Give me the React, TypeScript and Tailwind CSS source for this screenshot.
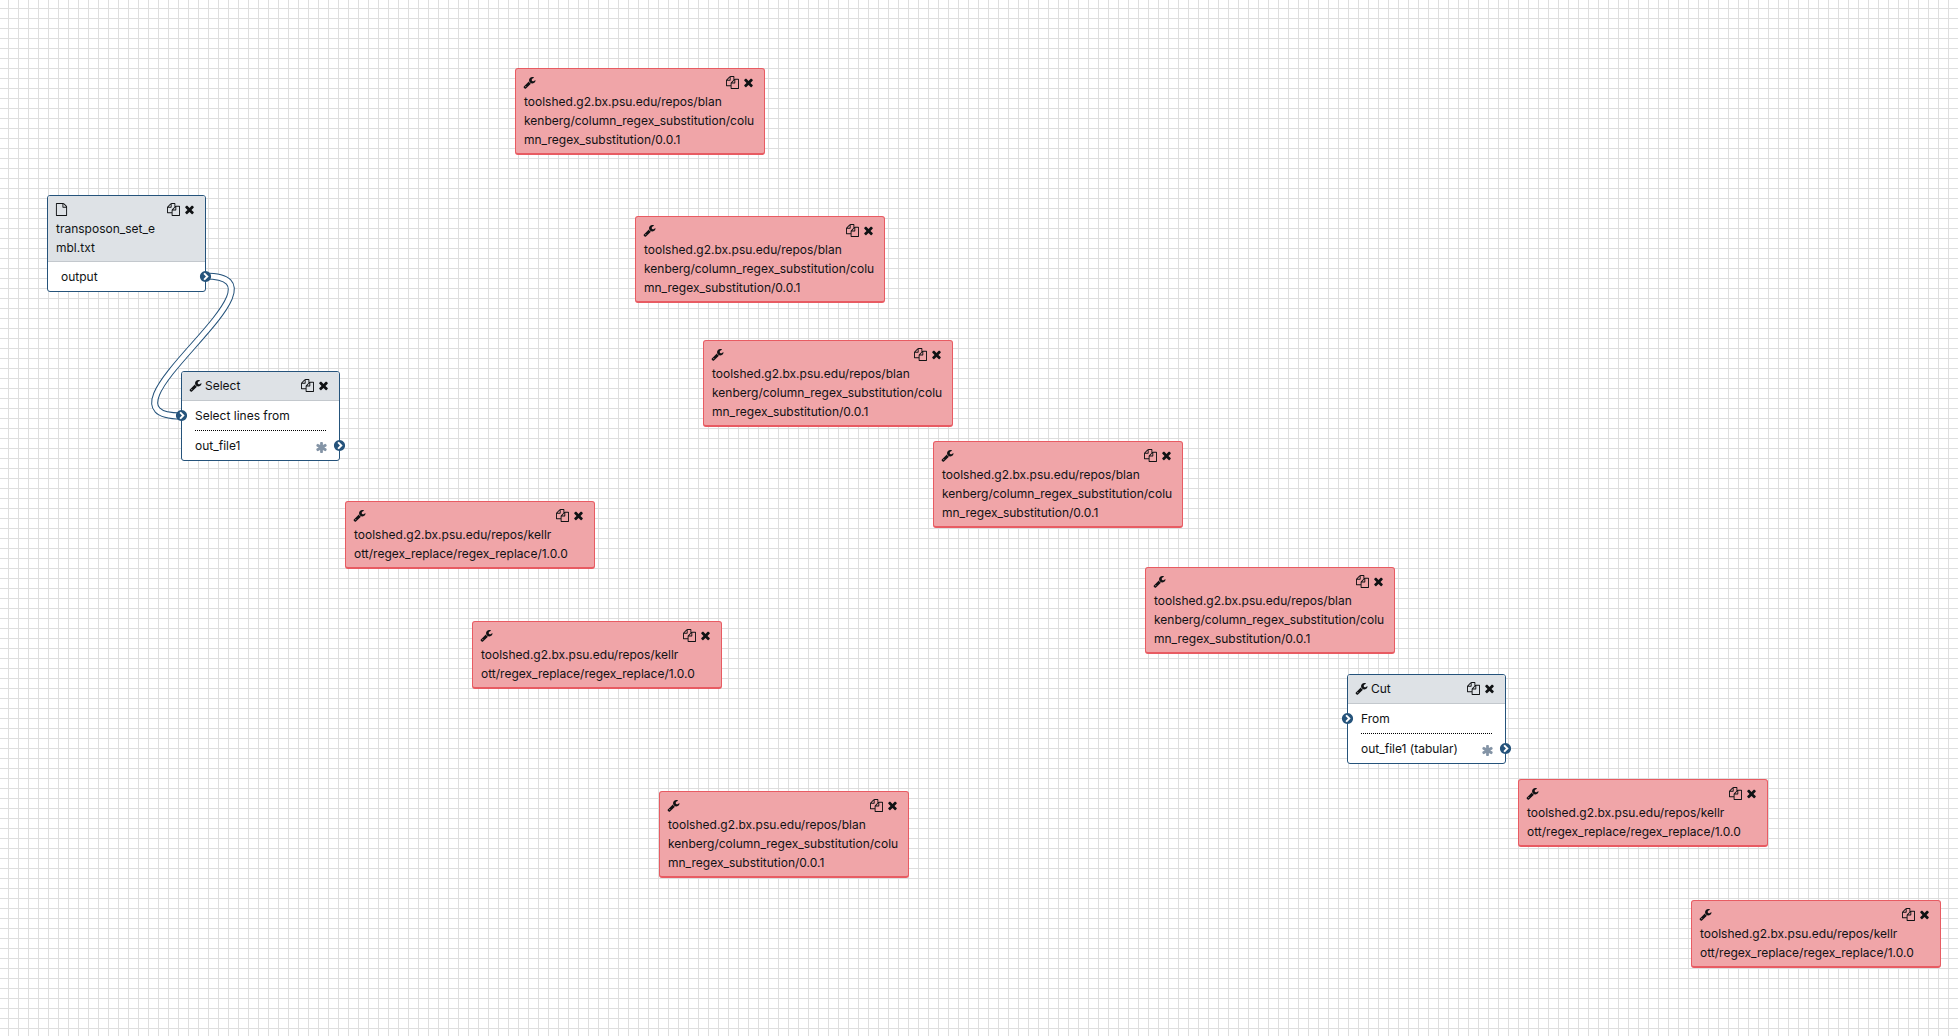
import React from "react";

const ICONS = {
  files:
    "M1696 384q40 0 68 28t28 68v1216q0 40-28 68t-68 28h-960q-40 0-68-28t-28-68v-288h-544q-40 0-68-28t-28-68v-672q0-40 20-88t48-76l408-408q28-28 76-48t88-20h416q40 0 68 28t28 68v328q68-40 128-40h416zm-544 213l-299 299h299v-299zm-640-384l-299 299h299v-299zm196 647l316-316v-416h-384v416q0 40-28 68t-68 28h-416v640h512v-256q0-40 20-88t48-76zm956 804v-1152h-384v416q0 40-28 68t-68 28h-416v640h896z",
  wrench:
    "M448 1472q0-26-19-45t-45-19-45 19-19 45 19 45 45 19 45-19 19-45zm644-420l-682 682q-37 37-90 37-52 0-91-37l-106-108q-38-36-38-90 0-53 38-91l681-681q39 98 114.5 173.5t173.5 114.5zm634-435q0 39-23 106-47 134-164.5 217.5t-258.5 83.5q-185 0-316.5-131.5t-131.5-316.5 131.5-316.5 316.5-131.5q58 0 121.5 16.5t107.5 46.5q16 11 16 28t-16 28l-293 169v224l193 107q5-3 79-48.5t135.5-81 70.5-35.5q15 0 23.5 10t8.5 25z",
  times:
    "M1490 1322q0 40-28 68l-136 136q-28 28-68 28t-68-28l-294-294-294 294q-28 28-68 28t-68-28l-136-136q-28-28-28-68t28-68l294-294-294-294q-28-28-28-68t28-68l136-136q28-28 68-28t68 28l294 294 294-294q28-28 68-28t68 28l136 136q28 28 28 68t-28 68l-294 294 294 294q28 28 28 68z",
  file:
    "M1596 380q28 28 48 76t20 88v1152q0 40-28 68t-68 28h-1344q-40 0-68-28t-28-68v-1600q0-40 28-68t68-28h896q40 0 88 20t76 48zm-444-244v376h376q-10-29-22-41l-313-313q-12-12-41-22zm384 1528v-1024h-416q-40 0-68-28t-28-68v-416h-768v1536h1280z",
  chevron:
    "M845 1395l454-454q19-19 19-45t-19-45l-454-454q-19-19-45-19t-45 19l-102 102q-19 19-19 45t19 45l307 307-307 307q-19 19-19 45t19 45l102 102q19 19 45 19t45-19zm819-499q0 209-103 385.5t-279.5 279.5-385.5 103-385.5-103-279.5-279.5-103-385.5 103-385.5 279.5-279.5 385.5-103 385.5 103 279.5 279.5 103 385.5z",
  asterisk:
    "M1546 1050q46 26 59.5 77.5t-12.5 97.5l-64 110q-26 46-77.5 59.5t-97.5-12.5l-266-153v307q0 52-38 90t-90 38h-128q-52 0-90-38t-38-90v-307l-266 153q-46 26-97.5 12.5t-77.5-59.5l-64-110q-26-46-12.5-97.5t59.5-77.5l266-154-266-154q-46-26-59.5-77.5t12.5-97.5l64-110q26-46 77.5-59.5t97.5 12.5l266 153v-307q0-52 38-90t90-38h128q52 0 90 38t38 90v307l266-153q46-26 97.5-12.5t77.5 59.5l64 110q26 46 12.5 97.5t-59.5 77.5l-266 154z",
};

function Icon({ name, className }: { name: keyof typeof ICONS; className: string }) {
  return (
    <svg viewBox="0 0 1792 1792" fill="currentColor" aria-hidden="true" className={className}>
      <path d={ICONS[name]} />
    </svg>
  );
}

function NodeActions() {
  return (
    <div className="ml-auto flex items-center gap-[3px] pr-px">
      <button type="button" aria-label="Duplicate" className="block">
        <Icon name="files" className="size-[13px]" />
      </button>
      <button type="button" aria-label="Remove" className="block">
        <Icon name="times" className="size-[13px]" />
      </button>
    </div>
  );
}

function Terminal({ side, label }: { side: "in" | "out"; label: string }) {
  return (
    <button
      type="button"
      aria-label={label}
      className={"absolute top-2 size-[13px] text-[#25537b] " + (side === "in" ? "-left-[7px]" : "-right-[7px]")}
    >
      <span className="absolute inset-[2px] rounded-full bg-white" />
      <Icon name="chevron" className="relative size-[13px]" />
    </button>
  );
}

type Place = { x: number; y: number };

const BLANKENBERG = ["toolshed.g2.bx.psu.edu/repos/blan", "kenberg/column_regex_substitution/colu", "mn_regex_substitution/0.0.1"];
const KELLROTT = ["toolshed.g2.bx.psu.edu/repos/kellr", "ott/regex_replace/regex_replace/1.0.0"];

const MISSING: (Place & { lines: string[] })[] = [
  { x: 515, y: 68, lines: BLANKENBERG },
  { x: 635, y: 216, lines: BLANKENBERG },
  { x: 703, y: 340, lines: BLANKENBERG },
  { x: 933, y: 441, lines: BLANKENBERG },
  { x: 345, y: 501, lines: KELLROTT },
  { x: 1145, y: 567, lines: BLANKENBERG },
  { x: 472, y: 621, lines: KELLROTT },
  { x: 659, y: 791, lines: BLANKENBERG },
  { x: 1518, y: 779, lines: KELLROTT },
  { x: 1691, y: 900, lines: KELLROTT },
];

function MissingNode({ x, y, lines }: Place & { lines: string[] }) {
  return (
    <section
      style={{ left: x, top: y }}
      className="absolute w-[250px] rounded-[3px] border border-b-2 border-[#e85b62] bg-[#f0a5a8] px-2 py-1"
    >
      <div className="flex h-[19px] items-center">
        <Icon name="wrench" className="-ml-px size-[13px]" />
        <NodeActions />
      </div>
      {lines.map((line) => (
        <div key={line} className="whitespace-nowrap">
          {line}
        </div>
      ))}
    </section>
  );
}

function ToolNode({ x, y, title, input, output }: Place & { title: string; input: string; output: string }) {
  return (
    <section style={{ left: x, top: y }} className="absolute w-[159px] rounded-[3px] border border-[#25537b] bg-white">
      <header className="flex items-center rounded-t-[2px] border-b border-[#c3c8cd] bg-[#dee2e6] px-2 pt-1 pb-[5px]">
        <Icon name="wrench" className="-ml-px mr-[3px] size-[13px]" />
        <h2>{title}</h2>
        <NodeActions />
      </header>
      <div className="relative px-[13px] py-[5px]">
        {input}
        <Terminal side="in" label={"Input: " + input} />
      </div>
      <hr className="mx-[13px] border-t border-dotted border-black" />
      <div className="relative flex items-center justify-between py-[5px] pl-[13px] pr-[11px]">
        {output}
        <button type="button" aria-label="Mark as workflow output" className="mt-[3px] text-[#8494a6]">
          <Icon name="asterisk" className="size-[13px]" />
        </button>
        <Terminal side="out" label={"Output: " + output} />
      </div>
    </section>
  );
}

function DatasetNode({ x, y }: Place) {
  return (
    <section style={{ left: x, top: y }} className="absolute w-[159px] rounded-[3px] border border-[#25537b] bg-white">
      <header className="rounded-t-[2px] border-b border-[#c3c8cd] bg-[#dee2e6] px-2 py-1">
        <div className="flex h-[19px] items-center">
          <Icon name="file" className="-ml-px size-[13px]" />
          <NodeActions />
        </div>
        <div>transposon_set_e</div>
        <div>mbl.txt</div>
      </header>
      <div className="relative px-[13px] py-[5px]">
        output
        <Terminal side="out" label="Output: output" />
      </div>
    </section>
  );
}

export default function App() {
  return (
    <main className="relative min-h-screen w-full overflow-hidden bg-white bg-[linear-gradient(to_right,#dedede_1px,transparent_1px),linear-gradient(to_bottom,#dedede_1px,transparent_1px)] bg-[length:10px_10px] bg-[position:8px_8px] font-['Inter',sans-serif] text-[12px] leading-[19px] text-[#101214]">
      <svg className="absolute left-0 top-0 h-[500px] w-[400px]" viewBox="0 0 400 500" fill="none" aria-hidden="true">
        <path d="M205 276C305 276 81 416 181 416" stroke="#25537b" strokeWidth="7" />
        <path d="M205 276C305 276 81 416 181 416" stroke="#fff" strokeWidth="5" />
      </svg>
      <DatasetNode x={47} y={195} />
      <ToolNode x={181} y={371} title="Select" input="Select lines from" output="out_file1" />
      <ToolNode x={1347} y={674} title="Cut" input="From" output="out_file1 (tabular)" />
      {MISSING.map((node) => (
        <MissingNode key={node.x} {...node} />
      ))}
    </main>
  );
}
